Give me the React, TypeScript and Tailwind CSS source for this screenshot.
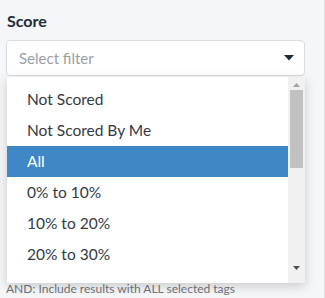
import React from 'react';

const OPTIONS = ['Not Scored', 'Not Scored By Me', 'All', '0% to 10%', '10% to 20%', '20% to 30%'];
const ACTIVE = 'All';

const ScoreFilter: React.FC = () => {
  return (
    <div className="relative w-[325px] h-[298px] overflow-hidden bg-[#f5f6f8] font-['Lato',sans-serif] border-r border-r-[#dcdde0]">
      <div className="w-[306px] pl-[6px] pr-[1px] pt-[11px] flex flex-col">
        <h3 className="pl-[1px] text-[16px] leading-[20px] font-bold text-[#222b38]">Score</h3>

        <div className="mt-[9px] h-[36px] flex items-center justify-between rounded-[4px] border border-[#d9dce1] bg-white pl-[12px] pr-[10px]">
          <span className="text-[15px] text-[#9a9ea5]">Select filter</span>
          <svg width="10" height="6" viewBox="0 0 10 6">
            <path d="M0 0h10L5 5.5z" fill="#1f2a37" />
          </svg>
        </div>

        {/* content under the open menu */}
        <div className="h-[205px]" />

        <p className="text-[12px] leading-[16px] text-[#6f747c]">AND: Include results with ALL selected tags</p>
      </div>

      {/* open dropdown menu */}
      <div className="absolute left-[7px] top-[77px] w-[298px] h-[206px] flex bg-white shadow-[0_3px_10px_rgba(0,0,0,0.18)]">
        <ul className="flex-1 pt-[7px] overflow-hidden">
          {OPTIONS.map((opt) => (
            <li
              key={opt}
              className={`h-[31px] flex items-center pl-[20px] text-[15.5px] ${
                opt === ACTIVE ? 'bg-[#3f88c5] text-white' : 'text-[#333a44]'
              }`}
            >
              {opt}
            </li>
          ))}
        </ul>
        <div className="w-[17px] bg-[#f1f1f1] flex flex-col items-center">
          <svg className="mt-[6px]" width="7" height="4" viewBox="0 0 7 4">
            <path d="M0 4h7L3.5 0z" fill="#a3a3a3" />
          </svg>
          <div className="mt-[3px] w-[13px] h-[78px] bg-[#c1c1c1]" />
          <div className="flex-1" />
          <svg className="mb-[13px]" width="7" height="4" viewBox="0 0 7 4">
            <path d="M0 0h7L3.5 4z" fill="#505050" />
          </svg>
        </div>
      </div>
    </div>
  );
};

export default function App() {
  return <ScoreFilter />;
}
